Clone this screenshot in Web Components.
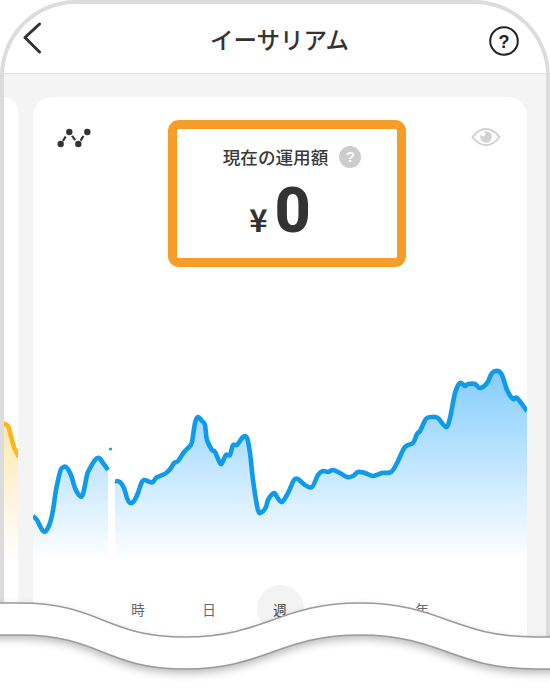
<!DOCTYPE html>
<html lang="ja">
<head>
<meta charset="utf-8">
<title>イーサリアム</title>
<style>
  html, body { margin: 0; height: 692px; overflow: hidden; background: #fff; }
  body { font-family: "Noto Sans CJK JP", "Noto Sans", sans-serif; color: #333; }
</style>
</head>
<body>
<phone-frame>
  <app-header slot="header" title="イーサリアム"></app-header>
  <side-card>
    <area-chart slot="chart" color="#fdb71c" fill="#ffdf95" box="4 360 14 200" points="2,424 4,424 8,426 11,436 14,447 19,457"></area-chart>
  </side-card>
  <value-card label="現在の運用額" amount="0">
    <area-chart slot="chart" color="#0f9bec" fill="#85cdff" box="33 360 494 200"
      points="33,516 37,520 40,526 43,531 46,531 50,523 53,510 56,490 60,472 62,468 66,467 71,475 75,488 80,496 83,494 87,475 89,470 95,460 99,458 103,463 108,470"
      points2="115,481 120,482 124,488 127,498 130,503 134,501 138,493 141,484 144,480 150,482 153,482 156,478 160,476 166,473 171,468 174,463 178,461 184,452 189,447 192,442 195,423 198,417 202,421 205,425 207,440 212,450 215,452 220,463 222,463 226,455 230,455 233,445 237,445 243,437 247,438 250,453 253,480 258,510 262,512 266,507 268,500 274,493 277,497 282,502 288,493 294,480 298,479 305,485 312,487 318,475 323,471 328,472 333,470 340,473 347,477 353,476 358,472 365,473 373,476 382,473 391,472 397,463 405,447 413,443 417,434 420,431 426,419 432,417 438,418 446,427 450,418 455,393 460,383 465,386 468,384 475,384 480,388 487,383 492,373 498,371 502,375 507,390 513,399 517,398 527,411"></area-chart>
    <range-tabs slot="tabs" items="時,日,週,月,年" active="週"></range-tabs>
  </value-card>
  <wave-tear slot="overlay"></wave-tear>
</phone-frame>

<script>
class PhoneFrame extends HTMLElement {
  constructor() {
    super();
    this.attachShadow({ mode: 'open' }).innerHTML = `
      <style>
        :host { display: block; position: relative; height: 692px; }
        .frame {
          box-sizing: border-box;
          height: 692px;
          border: 4px solid #dcdcdc;
          border-bottom: 0;
          border-radius: 76px 76px 0 0;
          overflow: hidden;
          background: #f4f4f4;
        }
        .cards { display: flex; gap: 15px; padding-top: 23px; height: 100%; box-sizing: border-box; }
      </style>
      <div class="frame">
        <slot name="header"></slot>
        <div class="cards"><slot></slot></div>
      </div>
      <slot name="overlay"></slot>
    `;
  }
}

class AppHeader extends HTMLElement {
  constructor() {
    super();
    this.attachShadow({ mode: 'open' }).innerHTML = `
      <style>
        :host {
          display: grid;
          grid-template-columns: 1fr auto 1fr;
          align-items: center;
          box-sizing: border-box;
          height: 70px;
          padding: 0 27px 0 19px;
          background: #fff;
          border-bottom: 1px solid #e4e4e4;
        }
        h1 { margin: 2px 0 0 17px; font-size: 23.5px; font-weight: 500; color: #333; line-height: 1; }
        svg { display: block; }
        .help { font: 700 18px "Liberation Sans", sans-serif; }
        .right { justify-self: end; margin-top: 4px; }
        .back { margin-top: -2px; }
      </style>
      <svg class="back" width="18" height="32" viewBox="0 0 18 32">
        <path d="M16.5 2 L2 15.5 L16.5 30" fill="none" stroke="#333" stroke-width="3" stroke-linecap="round" stroke-linejoin="round"/>
      </svg>
      <h1>${this.getAttribute('title')}</h1>
      <svg class="right" width="30" height="30" viewBox="0 0 30 30">
        <circle cx="15" cy="15" r="13.8" fill="none" stroke="#222" stroke-width="2"/>
        <text class="help" x="15" y="21.5" text-anchor="middle" fill="#222">?</text>
      </svg>
    `;
  }
}

class SideCard extends HTMLElement {
  constructor() {
    super();
    this.attachShadow({ mode: 'open' }).innerHTML = `
      <style>
        :host {
          display: block;
          flex: none;
          width: 14px;
          background: #fff;
          border-top-right-radius: 20px;
          padding-top: 263px;
        }
      </style>
      <slot name="chart"></slot>
    `;
  }
}

class ValueCard extends HTMLElement {
  constructor() {
    super();
    this.attachShadow({ mode: 'open' }).innerHTML = `
      <style>
        :host {
          display: block;
          flex: none;
          width: 494px;
          background: #fff;
          border-radius: 20px 20px 0 0;
        }
        .top {
          display: grid;
          grid-template-columns: 134.5px 238px 1fr;
          padding-top: 22.5px;
        }
        .chain { margin: 6px 0 0 24px; display: block; }
        .eye { margin: 7px 0 0 65px; display: block; }
        .box {
          box-sizing: border-box;
          height: 147px;
          border: 9px solid #f59d26;
          border-radius: 11px;
          padding-top: 15px;
          display: flex;
          flex-direction: column;
          align-items: center;
        }
        .label {
          display: flex;
          align-items: center;
          gap: 11px;
          margin-left: 11px;
          font-size: 17.6px;
          font-weight: 500;
          line-height: 26px;
          color: #3a3a3a;
        }
        .q {
          width: 22px;
          height: 22px;
          border-radius: 50%;
          background: #cdcdcd;
          color: #fff;
          font: 700 15px/22px "Liberation Sans", sans-serif;
          text-align: center;
        }
        .amount {
          display: flex;
          align-items: baseline;
          gap: 7px;
          margin: 5px 0 0 -13px;
          font-family: Roboto, "Liberation Sans", sans-serif;
          font-weight: 800;
          color: #333;
          line-height: 72px;
        }
        .yen { font-size: 31px; font-weight: 700; font-family: "Noto Sans CJK JP", sans-serif; }
        .num { font-size: 63px; }
        .chart { margin-top: 93.5px; }
      </style>
      <div class="top">
        <svg class="chain" width="36" height="24" viewBox="0 0 36 24">
          <path d="M6 15 L8.7 10.5 M15 9.8 L18.2 14.2 M23.6 14.8 L26.4 10" fill="none" stroke="#333" stroke-width="2.2"/>
          <circle cx="3.7" cy="18" r="3.2" fill="#333"/>
          <circle cx="12.3" cy="6" r="3.2" fill="#333"/>
          <circle cx="21.3" cy="18" r="3.2" fill="#333"/>
          <circle cx="30.3" cy="6" r="3.2" fill="#333"/>
        </svg>
        <div class="box">
          <div class="label"><span>${this.getAttribute('label')}</span><span class="q">?</span></div>
          <div class="amount"><span class="yen">¥</span><span class="num">${this.getAttribute('amount')}</span></div>
        </div>
        <svg class="eye" width="30" height="20" viewBox="0 0 30 20">
          <path d="M1.5 10 C6 4 10 2 15 2 C20 2 24 4 28.5 10 C24 16 20 18 15 18 C10 18 6 16 1.5 10 Z" fill="none" stroke="#d2d2d2" stroke-width="2"/>
          <circle cx="15" cy="10" r="5.8" fill="#d2d2d2"/>
          <circle cx="12.2" cy="7" r="2.2" fill="#fff"/>
        </svg>
      </div>
      <div class="chart"><slot name="chart"></slot></div>
      <slot name="tabs"></slot>
    `;
  }
}

// catmull-rom through the sampled points so the line keeps a soft curve
function smoothPath(pts) {
  const p = pts.split(' ').map((s) => s.split(',').map(Number));
  let d = `M${p[0][0]} ${p[0][1]}`;
  for (let i = 0; i < p.length - 1; i++) {
    const a = p[i - 1] || p[i];
    const b = p[i];
    const c = p[i + 1];
    const e = p[i + 2] || c;
    const c1 = [b[0] + (c[0] - a[0]) / 6, b[1] + (c[1] - a[1]) / 6];
    const c2 = [c[0] - (e[0] - b[0]) / 6, c[1] - (e[1] - b[1]) / 6];
    d += ` C${c1[0].toFixed(1)} ${c1[1].toFixed(1)} ${c2[0].toFixed(1)} ${c2[1].toFixed(1)} ${c[0]} ${c[1]}`;
  }
  return d;
}

class AreaChart extends HTMLElement {
  constructor() {
    super();
    const box = this.getAttribute('box');
    const [x, y, w, h] = box.split(' ').map(Number);
    const series = [this.getAttribute('points'), this.getAttribute('points2')].filter(Boolean);
    const bottom = y + h;
    const paths = series.map((pts) => {
      const list = pts.split(' ');
      const first = list[0].split(',')[0];
      const last = list[list.length - 1].split(',')[0];
      const line = smoothPath(pts);
      return `
        <path d="${line} L${last} ${bottom} L${first} ${bottom} Z" fill="url(#g)"/>
        <path d="${line}" fill="none" stroke="${this.getAttribute('color')}" stroke-width="4.6" stroke-linejoin="round" stroke-linecap="butt"/>
      `;
    }).join('');
    this.attachShadow({ mode: 'open' }).innerHTML = `
      <style>
        :host { display: block; }
        svg { display: block; }
      </style>
      <svg width="${w}" height="${h}" viewBox="${box}">
        <defs>
          <linearGradient id="g" gradientUnits="userSpaceOnUse" x1="0" y1="372" x2="0" y2="${bottom}">
            <stop offset="0" stop-color="${this.getAttribute('fill')}"/>
            <stop offset="1" stop-color="#fff"/>
          </linearGradient>
        </defs>
        ${paths}
        ${this.hasAttribute('points2') ? `<circle cx="110.5" cy="449" r="1.6" fill="${this.getAttribute('color')}"/>` : ''}
      </svg>
    `;
  }
}

class RangeTabs extends HTMLElement {
  constructor() {
    super();
    const active = this.getAttribute('active');
    const tabs = this.getAttribute('items').split(',').map((t) =>
      `<span class="tab${t === active ? ' on' : ''}">${t}</span>`).join('');
    this.attachShadow({ mode: 'open' }).innerHTML = `
      <style>
        :host { display: flex; padding: 25px 0 0 81.5px; }
        .tab {
          box-sizing: border-box;
          flex: none;
          width: 47px;
          height: 47px;
          margin-right: 24px;
          border-radius: 50%;
          padding-top: 2px;
          font-size: 13.5px;
          line-height: 44px;
          text-align: center;
          color: #666;
        }
        .on { background: #f3f3f3; color: #444; }
      </style>
      ${tabs}
    `;
  }
}

class WaveTear extends HTMLElement {
  constructor() {
    super();
    const wave = (y) => `M-20 ${y} L20 ${y} C100 ${y} 105 ${y + 34} 185 ${y + 34} S280 ${y} 360 ${y} S455 ${y + 34} 535 ${y + 34} L570 ${y + 34}`;
    const back = (y) => `L570 ${y + 34} L535 ${y + 34} C455 ${y + 34} 440 ${y} 360 ${y} S265 ${y + 34} 185 ${y + 34} S100 ${y} 20 ${y} L-20 ${y} Z`;
    this.attachShadow({ mode: 'open' }).innerHTML = `
      <style>
        :host { display: block; position: absolute; left: 0; top: 590px; width: 550px; height: 102px; }
        svg { display: block; overflow: hidden; }
        .band { filter: drop-shadow(0 4px 4px rgba(0,0,0,.28)); }
      </style>
      <svg width="550" height="102" viewBox="0 590 550 102">
        <path d="${wave(603)} L570 692 L-20 692 Z" fill="#fff"/>
        <path class="band" d="${wave(603)} ${back(635)}" fill="#fff"/>
        <path d="${wave(603)}" fill="none" stroke="#9a9a9a" stroke-width="1.5"/>
        <path d="${wave(635)}" fill="none" stroke="#9a9a9a" stroke-width="1.5"/>
      </svg>
    `;
  }
}

customElements.define('phone-frame', PhoneFrame);
customElements.define('app-header', AppHeader);
customElements.define('side-card', SideCard);
customElements.define('value-card', ValueCard);
customElements.define('area-chart', AreaChart);
customElements.define('range-tabs', RangeTabs);
customElements.define('wave-tear', WaveTear);
</script>
</body>
</html>
